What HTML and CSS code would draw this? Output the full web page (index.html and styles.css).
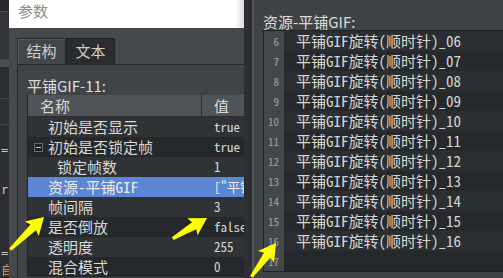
FILE: index.html
```html
<!DOCTYPE html>
<html lang="zh">

<head>
    <meta charset="UTF-8">
    <title>参数</title>
    <link rel="stylesheet" href="styles.css">
</head>

<body>
    <div class="screen">
        <div class="backdrop">
            <div class="band b1"></div>
            <div class="band b2"></div>
            <div class="band b3"></div>
            <div class="band b4"></div>
            <div class="band b5"></div>
            <div class="frag f1">=</div>
            <div class="frag f2">ri</div>
            <div class="frag f3">=</div>
            <div class="frag f4">自</div>
        </div>

        <section class="dialog">
            <header class="dialog-title">参数</header>
            <div class="dialog-body">
                <div class="tabs">
                    <div class="tab active">结构</div>
                    <div class="tab">文本</div>
                </div>
                <div class="tab-pane">
                    <div class="pane-label">平铺GIF-11:</div>
                    <div class="tree">
                        <div class="tree-head">
                            <div class="col-name">名称</div>
                            <div class="col-value">值</div>
                        </div>
                        <div class="tree-row">
                            <div class="col-name lvl1">初始是否显示</div>
                            <div class="col-value">true</div>
                        </div>
                        <div class="tree-row">
                            <div class="col-name lvl1"><span class="toggle"></span>初始是否锁定帧</div>
                            <div class="col-value">true</div>
                        </div>
                        <div class="tree-row">
                            <div class="col-name lvl2">锁定帧数</div>
                            <div class="col-value">1</div>
                        </div>
                        <div class="tree-row selected">
                            <div class="col-name lvl1">资源-平铺GIF</div>
                            <div class="col-value">["平铺GIF旋转(顺时针)_01"]</div>
                        </div>
                        <div class="tree-row">
                            <div class="col-name lvl1">帧间隔</div>
                            <div class="col-value">3</div>
                        </div>
                        <div class="tree-row">
                            <div class="col-name lvl1">是否倒放</div>
                            <div class="col-value">false</div>
                        </div>
                        <div class="tree-row">
                            <div class="col-name lvl1">透明度</div>
                            <div class="col-value">255</div>
                        </div>
                        <div class="tree-row">
                            <div class="col-name lvl1">混合模式</div>
                            <div class="col-value">0</div>
                        </div>
                    </div>
                </div>
            </div>
        </section>

        <div class="splitter"></div>

        <section class="list-panel">
            <div class="list-label">资源-平铺GIF:</div>
            <div class="list-box">
                <div class="line"><span class="ln">6</span><span class="txt">平铺GIF旋转(顺时针)_06</span></div>
                <div class="line"><span class="ln">7</span><span class="txt">平铺GIF旋转(顺时针)_07</span></div>
                <div class="line"><span class="ln">8</span><span class="txt">平铺GIF旋转(顺时针)_08</span></div>
                <div class="line"><span class="ln">9</span><span class="txt">平铺GIF旋转(顺时针)_09</span></div>
                <div class="line"><span class="ln">10</span><span class="txt">平铺GIF旋转(顺时针)_10</span></div>
                <div class="line"><span class="ln">11</span><span class="txt">平铺GIF旋转(顺时针)_11</span></div>
                <div class="line"><span class="ln">12</span><span class="txt">平铺GIF旋转(顺时针)_12</span></div>
                <div class="line"><span class="ln">13</span><span class="txt">平铺GIF旋转(顺时针)_13</span></div>
                <div class="line"><span class="ln">14</span><span class="txt">平铺GIF旋转(顺时针)_14</span></div>
                <div class="line"><span class="ln">15</span><span class="txt">平铺GIF旋转(顺时针)_15</span></div>
                <div class="line"><span class="ln">16</span><span class="txt">平铺GIF旋转(顺时针)_16</span></div>
                <div class="line"><span class="ln">17</span><span class="txt"></span></div>
            </div>
        </section>

        <!-- annotation arrows drawn over the screenshot -->
        <svg class="arrows" width="503" height="278" viewBox="0 0 503 278">
            <g transform="translate(44 217) rotate(-44)">
                <polygon points="-47,-1.5 -15,-4 -17,-10 0,0 -17,10 -15,4 -47,1.5" />
            </g>
            <g transform="translate(207 218) rotate(-31)">
                <polygon points="-40,-1.5 -15,-4 -17,-10 0,0 -17,10 -15,4 -40,1.5" />
            </g>
            <g transform="translate(276 243) rotate(-54)">
                <polygon points="-42,-1.5 -15,-4 -17,-10 0,0 -17,10 -15,4 -42,1.5" />
            </g>
        </svg>
    </div>
</body>

</html>
```

FILE: styles.css
```css
* {
    box-sizing: border-box;
    margin: 0;
    padding: 0;
}

html, body {
    width: 503px;
    height: 278px;
    overflow: hidden;
}

body {
    background-color: #2b2d30;
    color: #d8d8d8;
    font-family: "Noto Sans CJK SC", sans-serif;
}

.screen {
    position: relative;
    display: flex;
    width: 503px;
    height: 278px;
}

/* window behind the dialog */
.backdrop {
    width: 9px;
    flex: none;
    display: flex;
    flex-direction: column;
    overflow: hidden;
    background-color: #2b2d30;
    font-family: "DejaVu Sans Mono", monospace;
    font-size: 12px;
    color: #c8c8c8;
}

.band { flex: none; }
.b1 { height: 12px; background-color: #27292c; border-bottom: 1px solid #4c4f52; }
.b2 { height: 47px; background-color: #313336; }
.b3 { height: 8px; background-color: #4a4d50; }
.b4 { height: 32px; background-color: #2a2c2f; border-bottom: 1px solid #45484b; }
.b5 { height: 26px; background-color: #2d2f32; border-bottom: 1px solid #45484b; }

.frag { line-height: 14px; padding-left: 1px; }
.f1 { margin-top: 18px; }
.f2 { margin-top: 26px; }
.f3 { margin-top: 49px; }
.f4 { margin-top: 3px; color: #d9a070; font-family: "Noto Sans CJK SC", sans-serif; }

/* parameter dialog */
.dialog {
    width: 235px;
    flex: none;
    display: flex;
    flex-direction: column;
    overflow: hidden;
    background-color: #46494c;
}

.dialog-title {
    height: 28px;
    flex: none;
    padding-left: 9px;
    background: linear-gradient(to right, #fff 96%, #dcdcdc);
    color: #8c8c8c;
    font-size: 15px;
    line-height: 22px;
}

.dialog-body {
    flex: 1;
    padding: 10px 0 0 8px;
}

.tabs {
    display: flex;
    height: 26px;
}

.tab {
    width: 49px;
    border: 1px solid #202225;
    border-bottom: none;
    background-color: #2a2c2f;
    color: #d0d0d0;
    font-size: 15px;
    line-height: 24px;
    text-align: center;
}

.tab.active {
    background-color: #434649;
    border-color: #2a2c2e;
    box-shadow: inset 1px 1px 0 #56595c;
}

.tab-pane {
    width: 260px;
    height: 214px;
    border-top: 1px solid #25272a;
    border-left: 1px solid #25272a;
    background-color: #414447;
    padding: 12px 0 0 9px;
}

.pane-label {
    height: 18px;
    font-size: 15px;
    line-height: 18px;
    color: #dedede;
}

.tree {
    width: 250px;
    border-left: 1px solid #222427;
    background-color: #2a2d30;
}

.tree-head {
    display: flex;
    height: 22px;
    background-color: #505458;
    border-bottom: 1px solid #2a2c2f;
    font-size: 15px;
    line-height: 21px;
    color: #dadada;
}

.tree-head .col-name {
    padding-left: 12px;
    border-right: 1px solid #2c2e31;
}

.tree-row {
    display: flex;
    height: 20px;
    line-height: 20px;
    background-color: #26292c;
}

.tree-row:nth-child(even) {
    background-color: #303336;
}

.tree-row.selected {
    background-color: #5a86d5;
    color: #ececec;
}

.col-name {
    width: 174px;
    flex: none;
    display: flex;
    align-items: center;
    white-space: nowrap;
    overflow: hidden;
}

.tree-row .col-name {
    font-family: "Noto Sans Mono CJK SC", "Noto Sans CJK SC", monospace;
    font-size: 15px;
}

.col-value {
    padding-left: 12px;
    white-space: nowrap;
}

.tree-row .col-value {
    font-family: "Noto Sans Mono CJK SC", "DejaVu Sans Mono", monospace;
    font-size: 13px;
}

.lvl1 { padding-left: 20px; }
.lvl2 { padding-left: 29px; }

.toggle {
    width: 9px;
    height: 9px;
    margin: 0 5px 0 -14px;
    border: 1px solid #6a6d70;
    background:
        linear-gradient(#d0d0d0, #d0d0d0) center / 5px 1px no-repeat,
        #1f2124;
}

.splitter {
    width: 10px;
    flex: none;
    background-color: #2d2f32;
    border-right: 2px solid #54575a;
}

/* resource list */
.list-panel {
    flex: 1;
    overflow: hidden;
    background-color: #404346;
    padding: 13px 0 0 9px;
}

.list-label {
    height: 17px;
    font-size: 15px;
    line-height: 17px;
    color: #dcdcdc;
    white-space: nowrap;
}

.list-box {
    width: 260px;
    border: 1px solid #1f2123;
}

.line {
    display: flex;
    height: 20px;
    line-height: 20px;
}

.ln {
    width: 20px;
    flex: none;
    padding-right: 5px;
    background-color: #45484b;
    color: #9ea1a4;
    font-family: "Noto Sans Mono CJK SC", "DejaVu Sans Mono", monospace;
    font-size: 11px;
    text-align: right;
}

.txt {
    flex: 1;
    padding-left: 12px;
    background-color: #2c2f32;
    color: #d6d6d6;
    font-family: "Noto Sans Mono CJK SC", "DejaVu Sans Mono", monospace;
    font-size: 15px;
    white-space: nowrap;
}

.line:nth-child(even) .txt {
    background-color: #26292c;
}

.arrows {
    position: absolute;
    top: 0;
    left: 0;
    pointer-events: none;
    fill: #ffff00;
}
```
